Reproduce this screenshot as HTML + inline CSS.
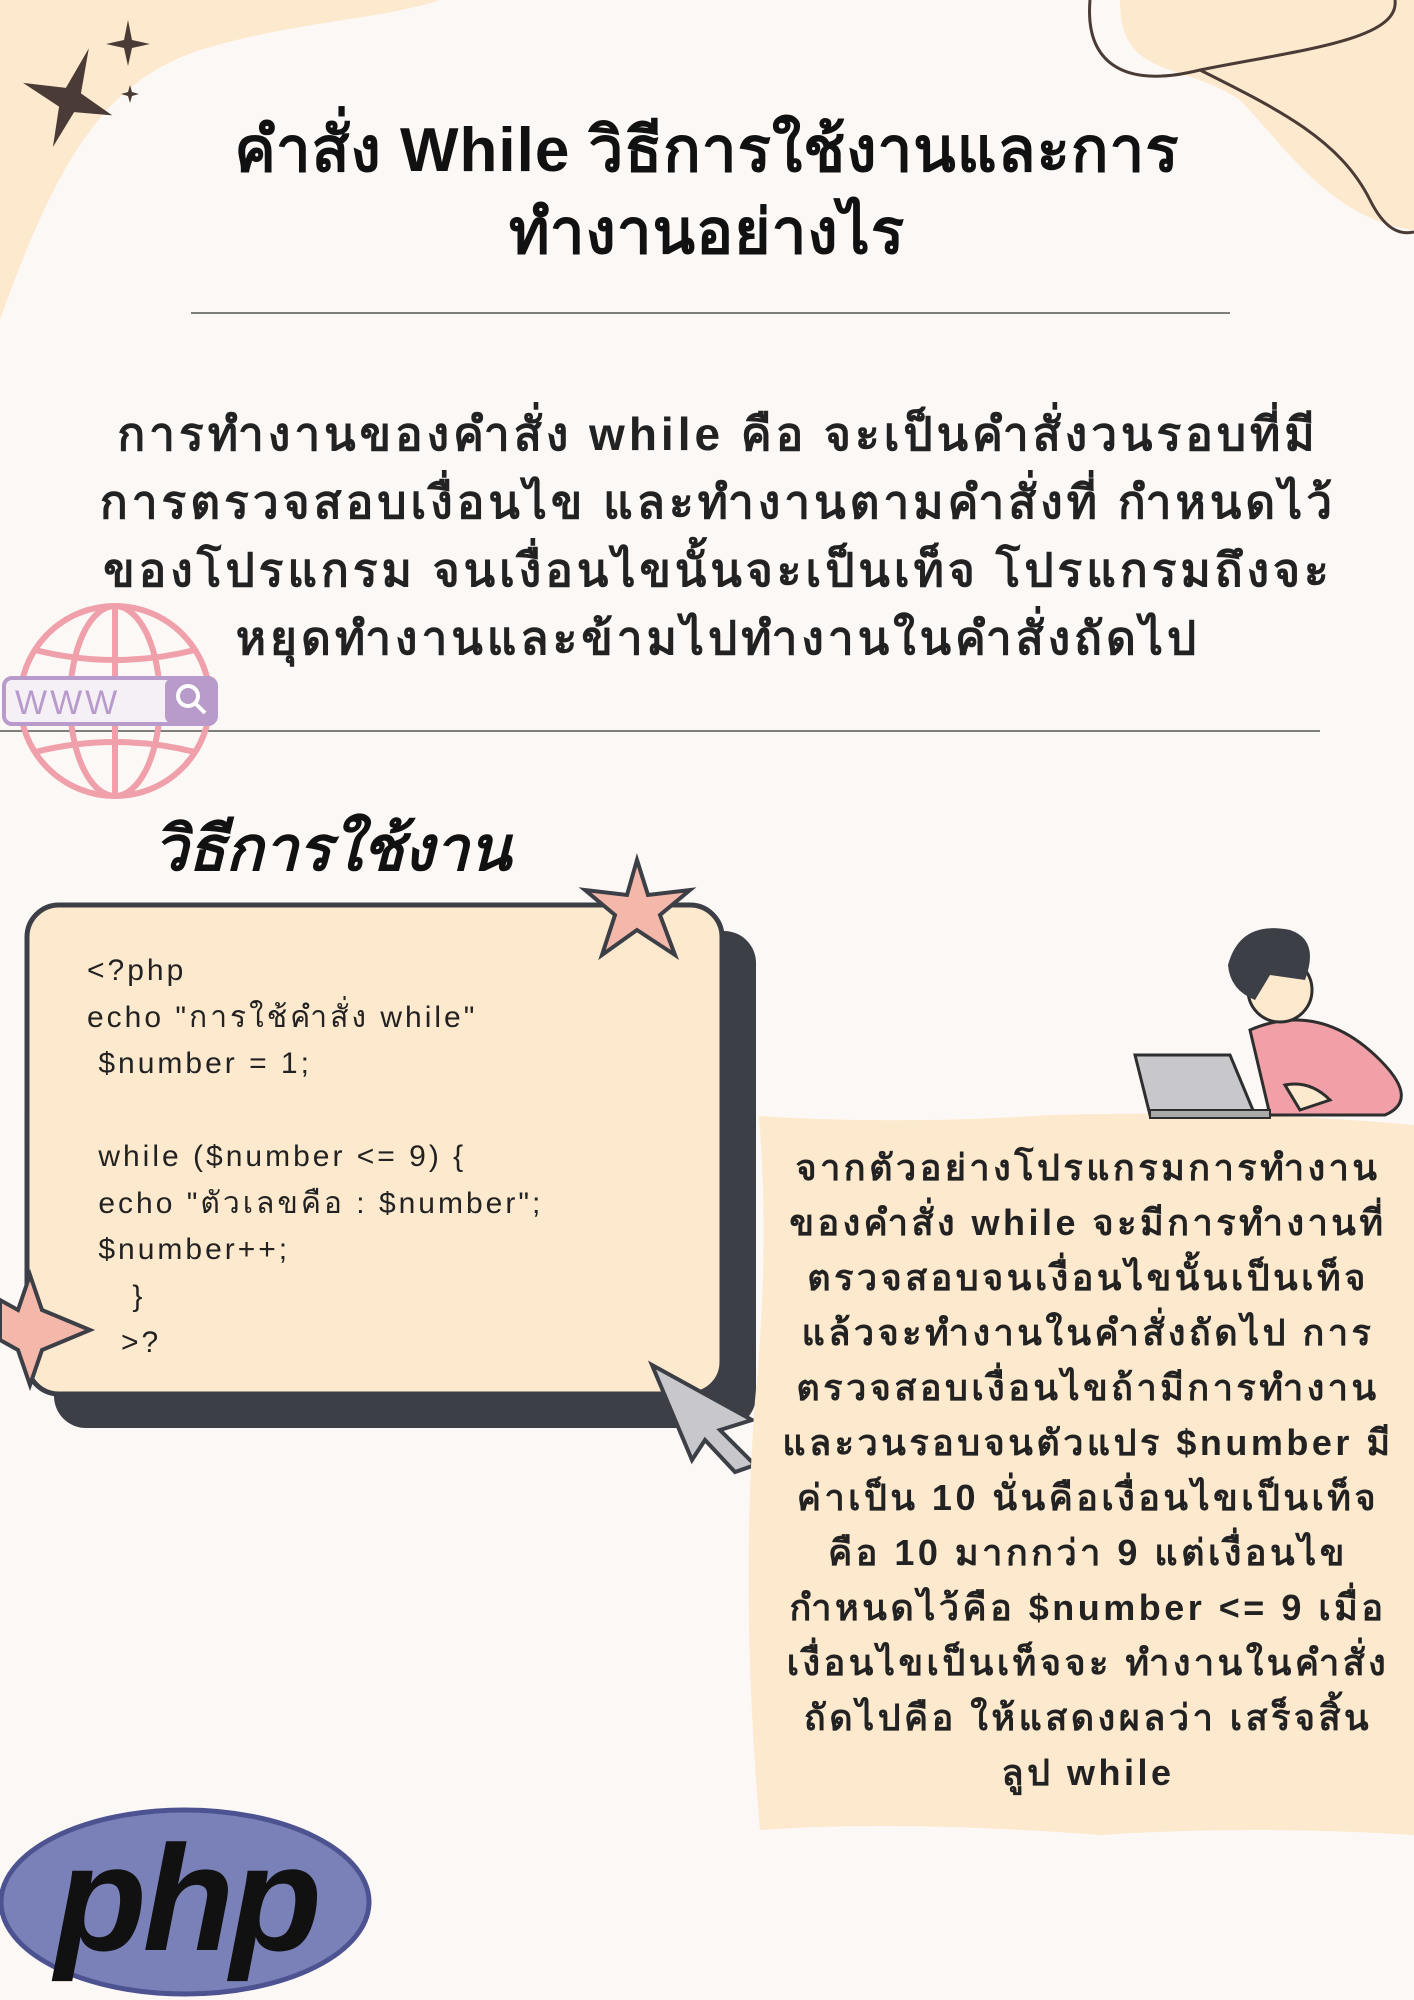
<!DOCTYPE html>
<html><head><meta charset="utf-8"><style>
html,body{margin:0;padding:0}
body{width:1414px;height:2000px;position:relative;overflow:hidden;background:#fcf8f6;font-family:"Liberation Sans","DejaVu Sans",sans-serif;color:#111}
.abs{position:absolute}
.title{left:0;width:1414px;top:110px;text-align:center;font-size:62px;font-weight:bold;line-height:82px;letter-spacing:1px}
.para{left:40px;width:1356px;top:400px;text-align:center;font-size:46px;font-weight:bold;line-height:68px;letter-spacing:4px;color:#222}
.code{font-size:30px;line-height:46.5px;color:#222;letter-spacing:3px}
.rt{left:762px;width:652px;top:1140px;text-align:center;font-size:36px;font-weight:bold;line-height:55px;letter-spacing:3.5px;color:#222}
</style></head><body>
<svg class="abs" style="left:0;top:0" width="1414" height="2000">
<path d="M0 0 L440 0 C380 20 300 20 200 50 C110 80 60 150 0 320 Z" fill="#fde9cd"/>
<path d="M1120 0 L1414 0 L1414 230 C1330 220 1280 140 1240 100 C1180 60 1120 80 1120 0 Z" fill="#fde9cd"/>
<path d="M1090 0 C1085 60 1120 90 1200 70 C1300 50 1400 40 1395 0" fill="none" stroke="#4a3b36" stroke-width="3"/>
<path d="M1200 70 C1280 110 1340 140 1370 200 C1385 230 1400 235 1414 232" fill="none" stroke="#4a3b36" stroke-width="3"/>
<path d="M70 45 L78 90 L115 100 L78 110 L70 150 L62 110 L20 100 L62 90 Z" fill="#4a3b36" transform="rotate(20 70 100)"/>
<path d="M128 20 L132 40 L150 44 L132 48 L128 66 L124 48 L106 44 L124 40Z" fill="#4a3b36"/>
<path d="M130 85 L132 92 L139 94 L132 96 L130 103 L128 96 L121 94 L128 92Z" fill="#4a3b36"/>
<line x1="191" y1="313" x2="1230" y2="313" stroke="#555" stroke-width="1.5"/>
<line x1="0" y1="731" x2="1320" y2="731" stroke="#555" stroke-width="1.5"/>
<g fill="none" stroke="#f0a0aa" stroke-width="6">
<circle cx="115" cy="701" r="95"/><ellipse cx="115" cy="701" rx="45" ry="95"/>
<line x1="115" y1="606" x2="115" y2="796"/><line x1="20" y1="701" x2="210" y2="701"/>
<path d="M35 650 Q115 670 195 650"/><path d="M35 752 Q115 732 195 752"/></g>
<rect x="4" y="678" width="212" height="46" rx="8" fill="#f4f0f6" stroke="#b89acb" stroke-width="4"/>
<rect x="165" y="678" width="51" height="46" rx="8" fill="#b89acb"/>
<circle cx="188" cy="696" r="10" fill="none" stroke="#fff" stroke-width="4"/><line x1="195" y1="703" x2="205" y2="713" stroke="#fff" stroke-width="4"/>
<text x="15" y="714" font-size="34" fill="#b89acb" font-family="Liberation Sans" letter-spacing="3">WWW</text>
<rect x="54" y="931" width="702" height="497" rx="32" fill="#3d3f47"/>
<rect x="27" y="905" width="695" height="489" rx="32" fill="#fde9cd" stroke="#3d3f47" stroke-width="5"/>
<path d="M637 860 L648 895 L690 890 L660 915 L675 955 L637 930 L602 955 L615 915 L585 890 L627 895Z" fill="#f4b8aa" stroke="#3d3f47" stroke-width="4"/>
<path d="M30 1275 L42 1310 L90 1330 L42 1350 L30 1385 L18 1350 L0 1340 L0 1300 L18 1310Z" fill="#f4b8aa" stroke="#3d3f47" stroke-width="4"/>
<path d="M652 1365 L752 1420 L720 1430 L755 1465 L735 1472 L705 1440 L692 1460 Z" fill="#c8c8cc" stroke="#3d3f47" stroke-width="4"/>
<path d="M759 1116 Q900 1125 1050 1115 Q1250 1110 1414 1125 L1414 1835 Q1250 1825 1100 1835 Q900 1820 760 1830 Q740 1600 755 1400 Q770 1250 759 1116Z" fill="#fde9cd"/>
<g>
<path d="M1250 1030 Q1320 1000 1380 1060 Q1420 1100 1385 1115 L1270 1115 Z" fill="#f0a0a6" stroke="#2e2e2e" stroke-width="3"/>
<circle cx="1280" cy="990" r="32" fill="#fde9cd" stroke="#2e2e2e" stroke-width="3"/>
<path d="M1228 965 Q1240 920 1290 930 Q1320 940 1305 980 L1270 975 L1255 1000 Q1230 990 1228 965Z" fill="#3d3f47"/>
<path d="M1135 1055 L1230 1055 L1255 1115 L1150 1115 Z" fill="#c8c8cc" stroke="#2e2e2e" stroke-width="3"/>
<rect x="1150" y="1110" width="120" height="8" fill="#aaa" stroke="#2e2e2e" stroke-width="2"/>
<path d="M1285 1085 Q1310 1080 1330 1100 L1300 1110 Z" fill="#fde9cd" stroke="#2e2e2e" stroke-width="3"/>
</g>
<ellipse cx="185" cy="1902" rx="184" ry="92" fill="#7a81b8" stroke="#4d5391" stroke-width="5"/>
<text x="55" y="1950" font-size="150" font-weight="bold" font-style="italic" font-family="Liberation Sans" fill="#111" letter-spacing="-4">php</text>
</svg>
<div class="abs title">คำสั่ง While วิธีการใช้งานและการ<br>ทำงานอย่างไร</div>
<div class="abs para">การทำงานของคำสั่ง while คือ จะเป็นคำสั่งวนรอบที่มี<br>การตรวจสอบเงื่อนไข และทำงานตามคำสั่งที่ กำหนดไว้<br>ของโปรแกรม จนเงื่อนไขนั้นจะเป็นเท็จ โปรแกรมถึงจะ<br>หยุดทำงานและข้ามไปทำงานในคำสั่งถัดไป</div>
<div class="abs" style="left:153px;top:800px;font-size:62px;font-weight:bold;font-style:italic;color:#111">วิธีการใช้งาน</div>
<div class="abs code" style="left:87px;top:948px">&lt;?php<br>echo "การใช้คำสั่ง while"<br>&nbsp;$number = 1;<br><br>&nbsp;while ($number &lt;= 9) {<br>&nbsp;echo "ตัวเลขคือ : $number";<br>&nbsp;$number++;<br>&nbsp;&nbsp;&nbsp;&nbsp;}<br>&nbsp;&nbsp;&nbsp;&gt;?</div>
<div class="abs rt">จากตัวอย่างโปรแกรมการทำงาน<br>ของคำสั่ง while จะมีการทำงานที่<br>ตรวจสอบจนเงื่อนไขนั้นเป็นเท็จ<br>แล้วจะทำงานในคำสั่งถัดไป การ<br>ตรวจสอบเงื่อนไขถ้ามีการทำงาน<br>และวนรอบจนตัวแปร $number มี<br>ค่าเป็น 10 นั่นคือเงื่อนไขเป็นเท็จ<br>คือ 10 มากกว่า 9 แต่เงื่อนไข<br>กำหนดไว้คือ $number &lt;= 9 เมื่อ<br>เงื่อนไขเป็นเท็จจะ ทำงานในคำสั่ง<br>ถัดไปคือ ให้แสดงผลว่า เสร็จสิ้น<br>ลูป while</div>
</body></html>
